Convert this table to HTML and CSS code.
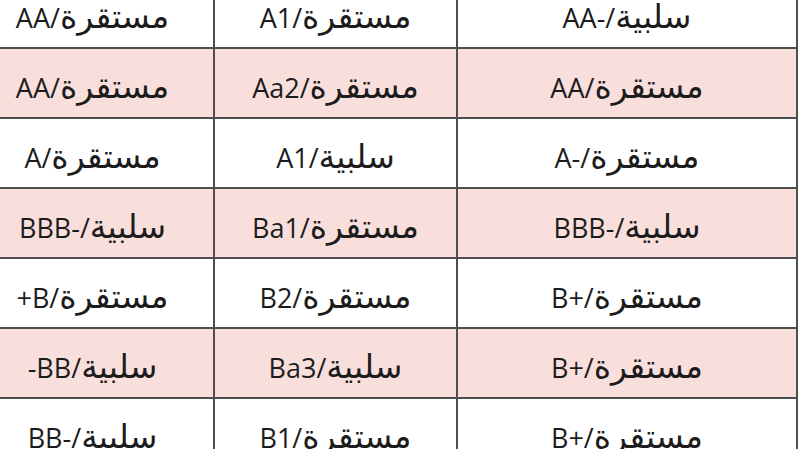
FILE: index.html
```html
<!DOCTYPE html>
<html lang="ar">
<head>
<meta charset="utf-8">
<link rel="stylesheet" href="styles.css">
</head>
<body>
<div class="viewport">
  <div class="grid">
    <div class="cell"><span>AA/</span><span class="ar">مستقرة</span></div>
    <div class="cell"><span>A1/</span><span class="ar">مستقرة</span></div>
    <div class="cell"><span>AA-/</span><span class="ar">سلبية</span></div>

    <div class="cell pink"><span>AA/</span><span class="ar">مستقرة</span></div>
    <div class="cell pink"><span>Aa2/</span><span class="ar">مستقرة</span></div>
    <div class="cell pink"><span>AA/</span><span class="ar">مستقرة</span></div>

    <div class="cell"><span>A/</span><span class="ar">مستقرة</span></div>
    <div class="cell"><span>A1/</span><span class="ar">سلبية</span></div>
    <div class="cell"><span>A-/</span><span class="ar">مستقرة</span></div>

    <div class="cell pink"><span>BBB-/</span><span class="ar">سلبية</span></div>
    <div class="cell pink"><span>Ba1/</span><span class="ar">مستقرة</span></div>
    <div class="cell pink"><span>BBB-/</span><span class="ar">سلبية</span></div>

    <div class="cell"><span>+B/</span><span class="ar">مستقرة</span></div>
    <div class="cell"><span>B2/</span><span class="ar">مستقرة</span></div>
    <div class="cell"><span>B+/</span><span class="ar">مستقرة</span></div>

    <div class="cell pink"><span>-BB/</span><span class="ar">سلبية</span></div>
    <div class="cell pink"><span>Ba3/</span><span class="ar">سلبية</span></div>
    <div class="cell pink"><span>B+/</span><span class="ar">مستقرة</span></div>

    <div class="cell"><span>BB-/</span><span class="ar">سلبية</span></div>
    <div class="cell"><span>B1/</span><span class="ar">مستقرة</span></div>
    <div class="cell"><span>B+/</span><span class="ar">مستقرة</span></div>
  </div>
</div>
</body>
</html>
```

FILE: styles.css
```css
html, body {
  margin: 0;
  padding: 0;
  background: #ffffff;
}

.viewport {
  width: 800px;
  height: 449px;
  overflow: hidden;
}

.grid {
  display: grid;
  grid-template-columns: 241px 241px 338px;
  grid-auto-rows: 68px;
  gap: 2px;
  padding: 2px;
  background: #4e4e4e;
  width: max-content;
  margin-left: -30px;
  margin-top: -23px;
}

.cell {
  background: #ffffff;
  display: flex;
  align-items: baseline;
  justify-content: center;
  padding-top: 19px;
  box-sizing: border-box;
  direction: ltr;
  font-family: "Open Sans", "DejaVu Sans", sans-serif;
  font-weight: 500;
  font-size: 27px;
  line-height: 36px;
  color: #1c1c1c;
  white-space: nowrap;
}

.ar {
  font-size: 33px;
  font-weight: 400;
  letter-spacing: 1.5px;
}

.pink {
  background: #f9dfdc;
}
```
